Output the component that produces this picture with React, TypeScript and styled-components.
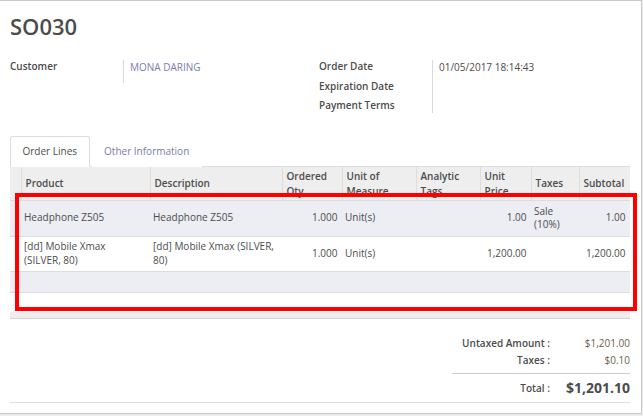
import React from "react";
import styled, { createGlobalStyle } from "styled-components";

const Global = createGlobalStyle`
  html, body { margin: 0; padding: 0; }
  body {
    background: #ececec;
    font-family: "Open Sans", "DejaVu Sans", sans-serif;
    font-size: 10px;
    color: #4c4c4c;
    overflow: hidden;
  }
`;

const Sheet = styled.div`
  position: relative;
  box-sizing: border-box;
  width: 643px;
  height: 414px;
  margin-left: -1px;
  background: #fff;
  border: 1px solid #c9c9c9;
  padding: 0 11px 0 10px;
  display: flex;
  flex-direction: column;
`;

const Title = styled.h1`
  margin: 10px 0 0;
  font-size: 22px;
  line-height: 30px;
  font-weight: 600;
  color: #4c4c4c;
`;

const Groups = styled.div`
  display: grid;
  grid-template-columns: 309px 1fr;
  margin-top: 16px;
`;

const Group = styled.div`
  display: grid;
  grid-template-columns: 113px 1fr;
  align-items: start;
`;

const Labels = styled.div`
  display: flex;
  flex-direction: column;
`;

const Label = styled.div`
  font-weight: 600;
  line-height: 19.7px;
  color: #4c4c4c;
`;

const Values = styled.div<{ $h: number }>`
  margin-top: 3px;
  height: ${(p) => p.$h}px;
  border-left: 1px solid #d9d9d9;
  padding-left: 6px;
  line-height: 15px;
`;

const Link = styled.span`
  color: #7c7bad;
`;

const DateValue = styled.span`
  color: #54493f;
`;

const TabBar = styled.div`
  display: flex;
  margin-top: 20px;
  border-bottom: 1px solid #dddddd;
`;

const Tab = styled.div<{ $active?: boolean }>`
  padding: 7px 11.5px;
  line-height: 15px;
  margin-right: 2px;
  margin-bottom: -1px;
  border: 1px solid ${(p) => (p.$active ? "#dddddd" : "transparent")};
  border-bottom-color: ${(p) => (p.$active ? "#fff" : "transparent")};
  border-radius: 3px 3px 0 0;
  background: #fff;
  color: ${(p) => (p.$active ? "#4c4c4c" : "#7c7bad")};
`;

const Table = styled.table`
  width: 620px;
  table-layout: fixed;
  border-collapse: collapse;
`;

const Th = styled.th<{ $first?: boolean }>`
  height: 33px;
  padding: 0 3px 0 4px;
  background: #eeeeee;
  border-bottom: 1px solid #dddddd;
  border-left: ${(p) => (p.$first ? "none" : "1px solid #dddddd")};
  text-align: left;
  vertical-align: middle;
  font-weight: 600;
  line-height: 15px;
  overflow: hidden;
  color: #4c4c4c;
`;

const Tr = styled.tr<{ $striped?: boolean }>`
  background: ${(p) => (p.$striped ? "#ededf4" : "#fff")};
  border-bottom: 1px solid #dddddd;
`;

const Td = styled.td<{ $num?: boolean }>`
  padding: 3.5px ${(p) => (p.$num ? "4.5px" : "3px")} 3.5px 3px;
  line-height: 13.7px;
  vertical-align: middle;
  text-align: ${(p) => (p.$num ? "right" : "left")};
  color: #4c4c4c;
`;

const EmptyTd = styled.td`
  height: 20px;
  padding: 0;
`;

const Spacer = styled.div`
  height: 19px;
`;

const Foot = styled.div`
  height: 6px;
  background: #eeeeee;
  border-bottom: 1px solid #d4d4d4;
`;

const Totals = styled.div`
  align-self: flex-end;
  margin-top: 16px;
  width: 178px;
  display: grid;
  grid-template-columns: 102px 76px;
`;

const TLabel = styled.div<{ $total?: boolean }>`
  text-align: right;
  padding-right: 4px;
  line-height: ${(p) => (p.$total ? "20px" : "17.4px")};
  font-weight: 600;
  color: #4c4c4c;
  ${(p) => p.$total && "border-top: 1px solid #cccccc; margin-top: 3px; padding-top: 4px;"}
`;

const TValue = styled.div<{ $total?: boolean }>`
  text-align: right;
  line-height: ${(p) => (p.$total ? "20px" : "17.4px")};
  color: ${(p) => (p.$total ? "#4c4c4c" : "#6e5e4a")};
  font-size: ${(p) => (p.$total ? "14px" : "10px")};
  font-weight: ${(p) => (p.$total ? 700 : 400)};
  ${(p) => p.$total && "border-top: 1px solid #cccccc; margin-top: 3px; padding-top: 4px;"}
`;

const Divider = styled.div`
  margin-top: 4px;
  border-top: 1px solid #dddddd;
`;

const Annotation = styled.div`
  position: absolute;
  left: 15px;
  top: 192px;
  width: 622px;
  height: 118px;
  box-sizing: border-box;
  border: 4px solid #ff0000;
  pointer-events: none;
`;

const cols = [11, 129, 132, 60, 74, 64, 51, 48, 51];

const rows = [
  {
    product: "Headphone Z505",
    desc: "Headphone Z505",
    qty: "1.000",
    uom: "Unit(s)",
    price: "1.00",
    taxes: <>Sale<br />(10%)</>,
    subtotal: "1.00",
  },
  {
    product: <>[dd] Mobile Xmax<br />(SILVER, 80)</>,
    desc: <>[dd] Mobile Xmax (SILVER,<br />80)</>,
    qty: "1.000",
    uom: "Unit(s)",
    price: "1,200.00",
    taxes: "",
    subtotal: "1,200.00",
  },
];

export default function App() {
  return (
    <>
      <Global />
      <Sheet>
        <Title>SO030</Title>
        <Groups>
          <Group>
            <Labels>
              <Label>Customer</Label>
            </Labels>
            <Values $h={23}>
              <Link>MONA DARING</Link>
            </Values>
          </Group>
          <Group>
            <Labels>
              <Label>Order Date</Label>
              <Label>Expiration Date</Label>
              <Label>Payment Terms</Label>
            </Labels>
            <Values $h={53}>
              <DateValue>01/05/2017 18:14:43</DateValue>
            </Values>
          </Group>
        </Groups>
        <TabBar>
          <Tab $active>Order Lines</Tab>
          <Tab>Other Information</Tab>
        </TabBar>
        <Table>
          <colgroup>
            {cols.map((w, i) => (
              <col key={i} style={{ width: w }} />
            ))}
          </colgroup>
          <thead>
            <tr>
              <Th $first></Th>
              <Th>Product</Th>
              <Th>Description</Th>
              <Th>Ordered<br />Qty</Th>
              <Th>Unit of<br />Measure</Th>
              <Th>Analytic<br />Tags</Th>
              <Th>Unit<br />Price</Th>
              <Th>Taxes</Th>
              <Th>Subtotal</Th>
            </tr>
          </thead>
          <tbody>
            {rows.map((r, i) => (
              <Tr key={i} $striped={i % 2 === 0}>
                <Td></Td>
                <Td>{r.product}</Td>
                <Td>{r.desc}</Td>
                <Td $num>{r.qty}</Td>
                <Td>{r.uom}</Td>
                <Td></Td>
                <Td $num>{r.price}</Td>
                <Td>{r.taxes}</Td>
                <Td $num>{r.subtotal}</Td>
              </Tr>
            ))}
            <Tr $striped>
              <EmptyTd colSpan={9} />
            </Tr>
          </tbody>
        </Table>
        <Spacer />
        <Foot />
        <Totals>
          <TLabel>Untaxed Amount :</TLabel>
          <TValue>$1,201.00</TValue>
          <TLabel>Taxes :</TLabel>
          <TValue>$0.10</TValue>
          <TLabel $total>Total :</TLabel>
          <TValue $total>$1,201.10</TValue>
        </Totals>
        <Divider />
        <Annotation />
      </Sheet>
    </>
  );
}
